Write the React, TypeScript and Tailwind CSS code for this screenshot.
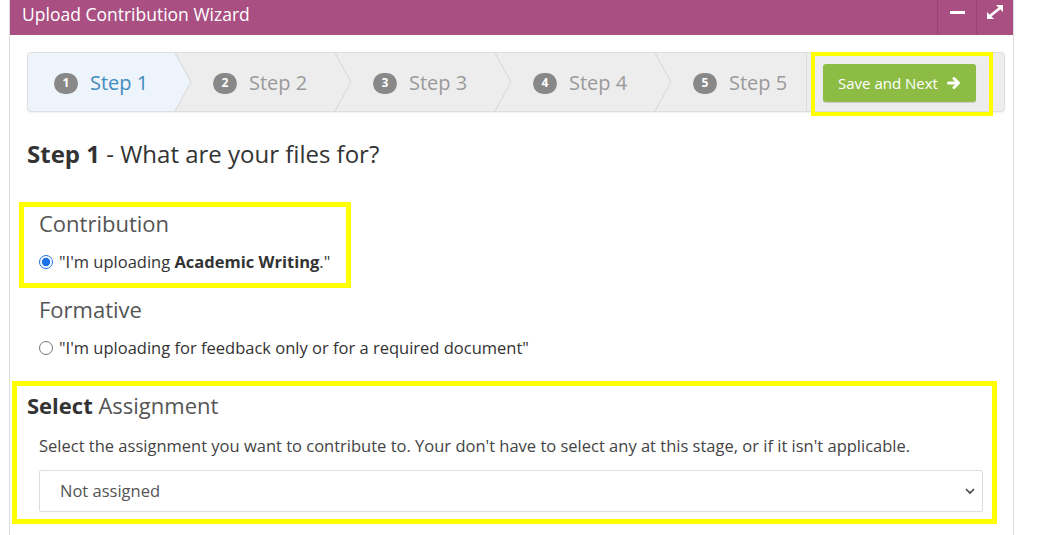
const STEPS = [
  { n: 1, w: 147, pl: 26, active: true },
  { n: 2, w: 160, pl: 38, active: false },
  { n: 3, w: 160, pl: 38, active: false },
  { n: 4, w: 160, pl: 38, active: false },
  { n: 5, w: 152, pl: 38, active: false, last: true },
];

function Chevron({ fill }: { fill?: string }) {
  return (
    <svg
      className="absolute top-0 right-[-16px] z-10 h-full w-[16px]"
      viewBox="0 0 16 58"
      preserveAspectRatio="none"
    >
      {fill && <polygon points="0,0 16,29 0,58" fill={fill} />}
      <polyline points="0,0 16,29 0,58" fill="none" stroke="#d6d6d6" strokeWidth="1" />
    </svg>
  );
}

function StepsBar() {
  return (
    <div className="flex h-[60px] w-[978px] rounded-[4px] border border-[#dedede] bg-[#ededed] shadow-[0_1px_2px_rgba(0,0,0,0.06)]">
      {STEPS.map((s) => (
        <div
          key={s.n}
          className={
            "relative flex h-full items-center gap-[12px] pt-[2px] " +
            (s.active ? "rounded-l-[4px] bg-[#eef4fb] " : "") +
            (s.last ? "border-r border-[#dcdcdc] " : "")
          }
          style={{ width: s.w, paddingLeft: s.pl }}
        >
          <span className="flex h-[21px] w-[24px] items-center justify-center rounded-full bg-[#888] text-[12px] font-bold leading-none text-white">
            {s.n}
          </span>
          <span className={"text-[20px] leading-none " + (s.active ? "text-[#3f8cc0]" : "text-[#9a9a9a]")}>
            Step {s.n}
          </span>
          {!s.last && <Chevron fill={s.active ? "#eef4fb" : undefined} />}
        </div>
      ))}
      <div className="flex flex-1 items-center pl-[16px] pt-[2px]">
        <button
          type="button"
          className="flex h-[38px] w-[153px] items-center justify-center gap-[9px] rounded-[3px] bg-[#8dbc45] text-[15px] text-white shadow-[0_1px_1px_rgba(0,0,0,0.15)]"
        >
          Save and Next
          <svg width="14" height="14" viewBox="0 0 14 14">
            <line x1="1.5" y1="7" x2="10.5" y2="7" stroke="white" strokeWidth="3" strokeLinecap="round" />
            <polyline
              points="7,2.5 11.5,7 7,11.5"
              fill="none"
              stroke="white"
              strokeWidth="3"
              strokeLinecap="round"
              strokeLinejoin="round"
            />
          </svg>
        </button>
      </div>
    </div>
  );
}

export default function App() {
  return (
    <div className="relative h-[535px] w-[1063px] overflow-hidden bg-white font-['Open_Sans',sans-serif] text-[#333]">
      <div className="ml-[9px] h-full w-[1005px] border-x border-[#dddddd]">
        <div className="flex h-[35px] items-stretch bg-[#a94f82] text-white">
          <div className="flex-1 pl-[12px] pt-[2px] text-[17.5px] leading-[24px]">Upload Contribution Wizard</div>
          <div className="flex w-[39px] justify-center border-l border-[#9a4474] pt-[11px]">
            <span className="h-[3px] w-[15px] bg-white" />
          </div>
          <div className="flex w-[37px] justify-center border-l border-[#9a4474] pt-[4px]">
            <svg width="18" height="16" viewBox="0 0 18 16">
              <line x1="4" y1="12" x2="14" y2="4" stroke="white" strokeWidth="2.6" />
              <polygon points="10,1 17,1 17,8" fill="white" />
              <polygon points="1,8 1,15 8,15" fill="white" />
            </svg>
          </div>
        </div>

        <div className="pl-[17px]">
          <div className="pt-[17px]">
            <StepsBar />
          </div>

          <h2 className="mt-[26px] text-[24px] leading-[32px] text-[#333]">
            <span className="font-bold">Step 1</span> - What are your files for?
          </h2>

          <div className="pl-[12px]">
            <div className="mt-[38px] text-[22px] leading-[30px] text-[#555]">Contribution</div>
            <label className="mt-[13px] flex h-[22px] items-center gap-[6px] text-[16.5px]">
              <input type="radio" name="purpose" defaultChecked className="m-0 h-[14px] w-[14px] accent-[#1a73e8]" />
              <span>
                "I'm uploading <b>Academic Writing</b>."
              </span>
            </label>
            <div className="mt-[21px] text-[22px] leading-[30px] text-[#555]">Formative</div>
            <label className="mt-[13px] flex h-[22px] items-center gap-[6px] text-[16.5px]">
              <input type="radio" name="purpose" className="m-0 h-[14px] w-[14px]" />
              <span>"I'm uploading for feedback only or for a required document"</span>
            </label>
          </div>

          <div className="mt-[31px] text-[22px] leading-[30px] text-[#555]">
            <span className="font-bold text-[#333]">Select</span> Assignment
          </div>
          <div className="pl-[12px]">
            <p className="mt-[14px] text-[16.5px] leading-[24px] text-[#444]">
              Select the assignment you want to contribute to. Your don't have to select any at this stage, or if it isn't applicable.
            </p>
            <div className="relative mt-[12px] w-[944px]">
              <select className="h-[42px] w-full appearance-none rounded-[2px] border border-[#dddddd] bg-white pl-[20px] text-[16.5px] text-[#555] outline-none">
                <option>Not assigned</option>
              </select>
              <svg
                className="pointer-events-none absolute right-[8px] top-[17px]"
                width="10"
                height="8"
                viewBox="0 0 10 8"
              >
                <polyline points="1,2 5,6 9,2" fill="none" stroke="#444" strokeWidth="1.6" />
              </svg>
            </div>
          </div>
        </div>
      </div>

      {/* yellow highlight annotations */}
      <div className="pointer-events-none absolute left-[811px] top-[52px] h-[64px] w-[182px] border-[4px] border-[#ffff00]" />
      <div className="pointer-events-none absolute left-[19px] top-[202px] h-[86px] w-[332px] border-[5px] border-[#ffff00]" />
      <div className="pointer-events-none absolute left-[12px] top-[381px] h-[143px] w-[985px] border-[5px] border-[#ffff00]" />
    </div>
  );
}
